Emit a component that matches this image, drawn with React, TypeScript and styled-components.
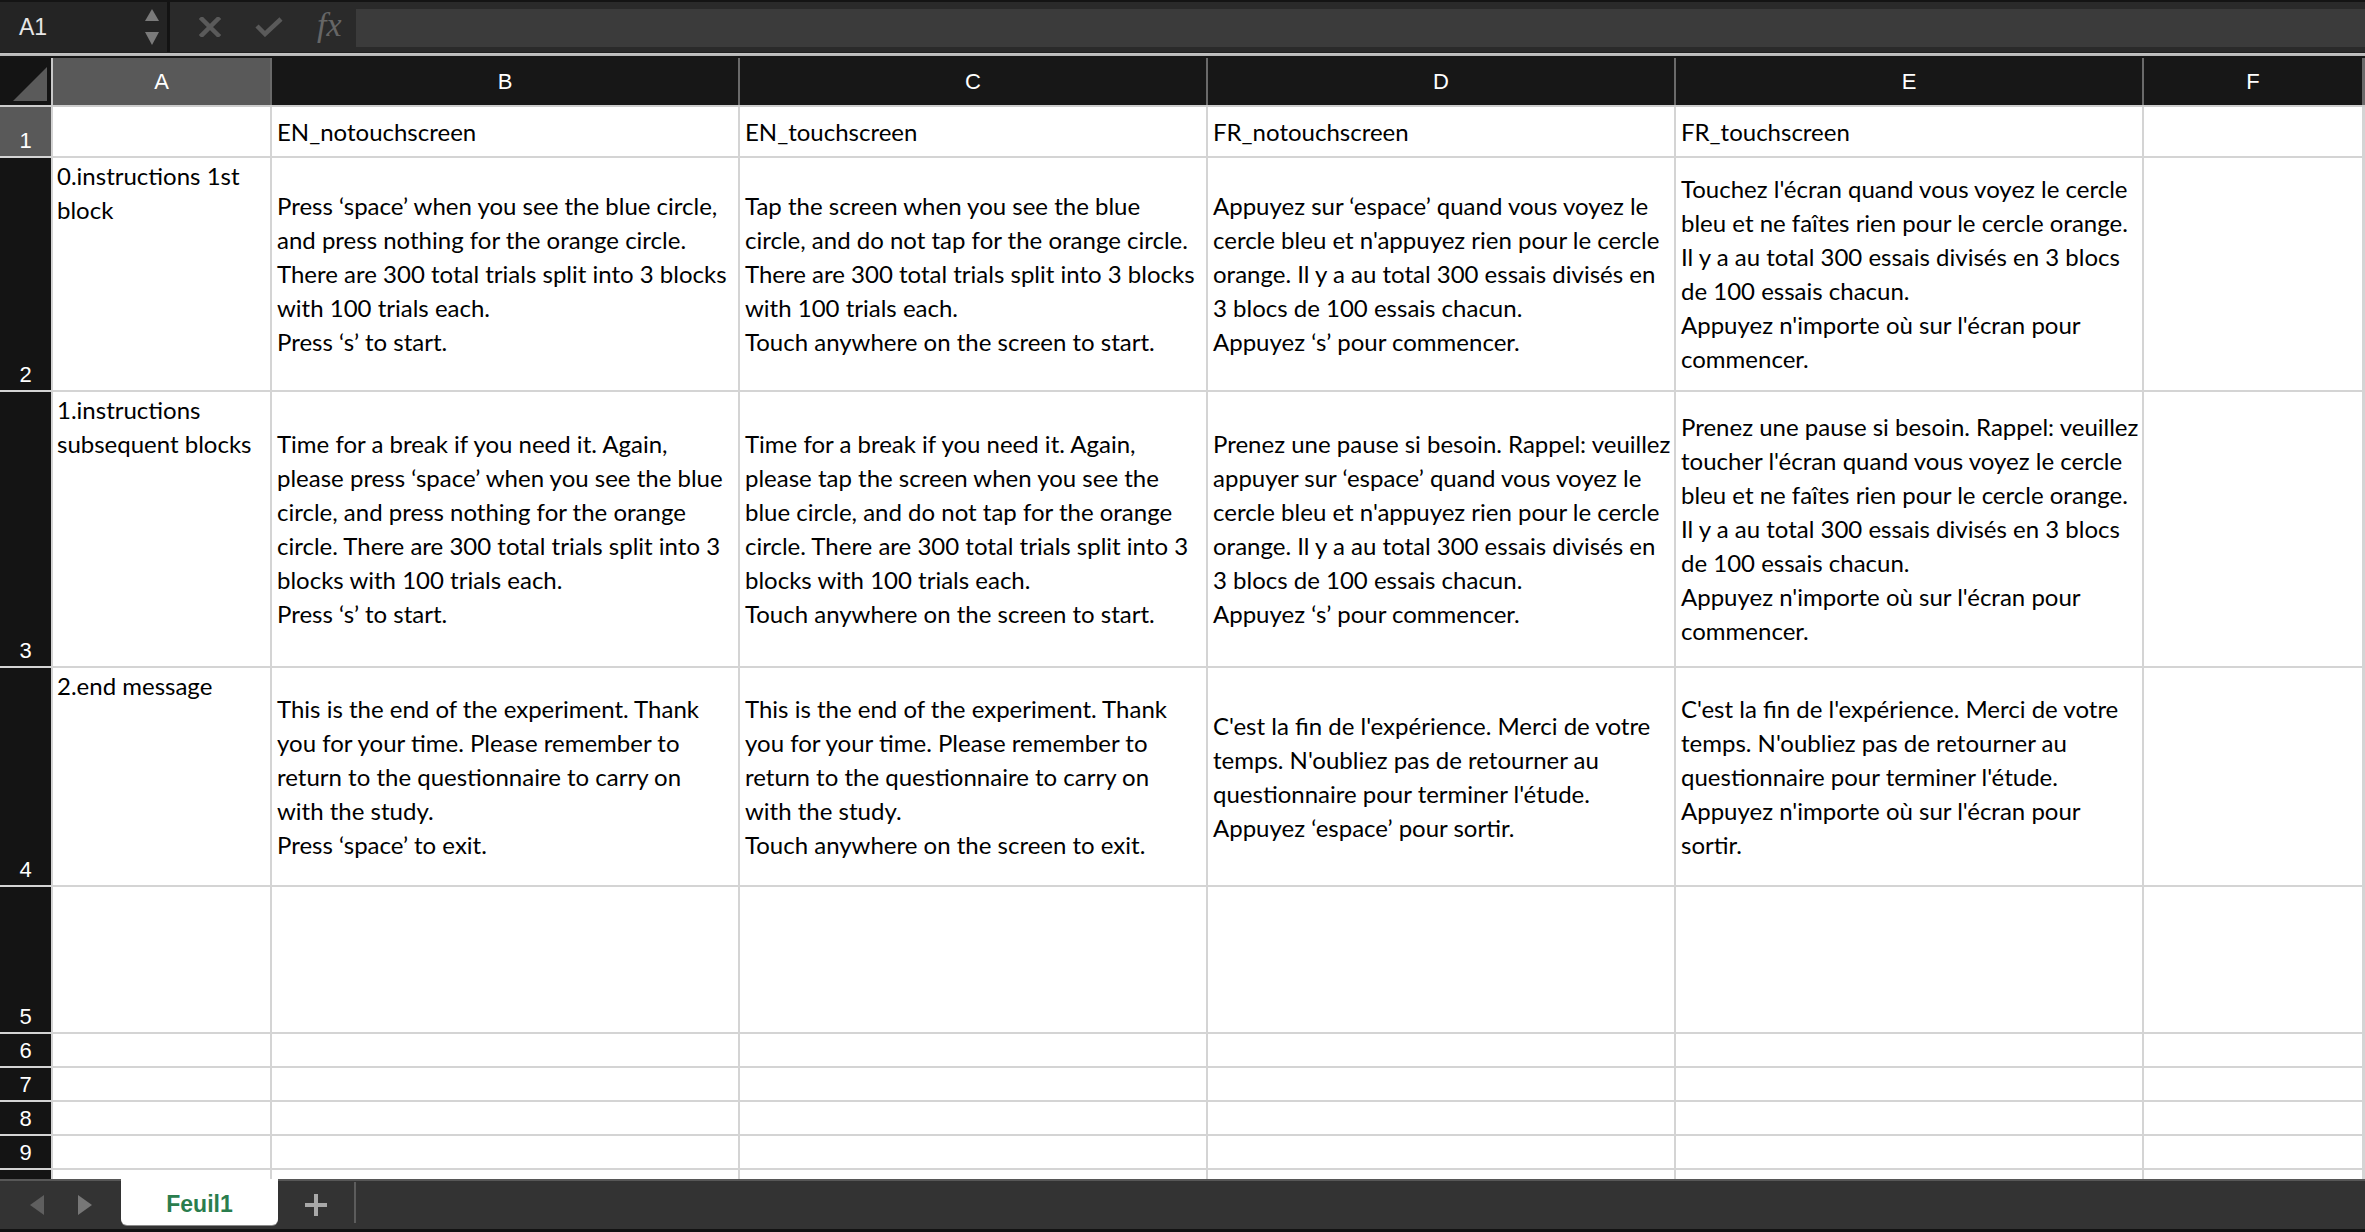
import React from 'react';
import styled, { createGlobalStyle } from 'styled-components';

// column template shared by the header row and the sheet body
const COLS = '51px 217px 466px 466px 466px 466px 1fr';

const GlobalStyle = createGlobalStyle`
  html, body {
    margin: 0;
    padding: 0;
    height: 100%;
    overflow: hidden;
    background: #1c1c1c;
  }
  #root {
    height: 100%;
  }
`;

const Window = styled.div`
  display: flex;
  flex-direction: column;
  width: 2365px;
  height: 1232px;
  overflow: hidden;
  font-family: 'Liberation Sans', Arial, sans-serif;
`;

const FormulaBar = styled.div`
  display: flex;
  height: 52px;
  box-sizing: border-box;
  border-top: 2px solid #141414;
  background: #2a2a2a;
`;

const NameBox = styled.div`
  width: 170px;
  box-sizing: border-box;
  display: flex;
  align-items: center;
  justify-content: space-between;
  padding: 0 8px 0 19px;
  background: #242424;
  border-right: 3px solid #131313;
  color: #e6e6e6;
  font-size: 23px;
`;

const Tools = styled.div`
  display: flex;
  align-items: center;
  gap: 34px;
  padding: 0 14px 0 29px;
`;

const FxLabel = styled.span`
  font-family: 'Liberation Serif', 'DejaVu Serif', serif;
  font-style: italic;
  font-size: 34px;
  color: #666666;
  margin-top: -4px;
`;

const FormulaInput = styled.div`
  flex: 1;
  margin: 7px 0 5px;
  background: #3b3b3b;
`;

const Divider = styled.div`
  height: 6px;
  background: linear-gradient(#1e1e1e 0, #1e1e1e 1px, #c4c4c4 1px, #b5b5b5 4px, #161616 4px);
`;

const HeaderRow = styled.div`
  display: grid;
  grid-template-columns: ${COLS};
  column-gap: 2px;
  height: 49px;
  box-sizing: border-box;
  padding-right: 3px;
  background: #6a6a6a;
  border-bottom: 2px solid #cdcdcd;
`;

const Corner = styled.div`
  position: relative;
  background: #141414;
  box-shadow: 2px 0 0 #c8c8c8;
`;

const ColHeader = styled.div<{ $selected?: boolean }>`
  display: flex;
  align-items: center;
  justify-content: center;
  background: ${(p) => (p.$selected ? '#595959' : '#171717')};
  color: #ffffff;
  font-size: 22px;
`;

const Body = styled.div`
  flex: 1;
  overflow: hidden;
  display: grid;
  grid-template-columns: ${COLS};
  grid-template-rows: 49px 232px 274px 217px 145px 32px 32px 32px 32px 32px;
  gap: 2px;
  align-content: start;
  padding-right: 3px;
  background: #d4d4d4;
`;

const RowHeader = styled.div<{ $selected?: boolean }>`
  display: flex;
  align-items: flex-end;
  justify-content: center;
  padding-bottom: 3px;
  background: ${(p) => (p.$selected ? '#595959' : '#141414')};
  color: #ffffff;
  font-size: 22px;
  line-height: 24px;
`;

const Cell = styled.div<{ $valign?: 'top' | 'center' }>`
  display: flex;
  flex-direction: column;
  justify-content: ${(p) => (p.$valign === 'top' ? 'flex-start' : 'center')};
  padding: ${(p) => (p.$valign === 'top' ? '1px 4px 0' : '0 5px')};
  overflow: hidden;
  background: #ffffff;
  color: #000000;
  font-family: Lato, 'Liberation Sans', sans-serif;
  font-size: 24px;
  line-height: 34px;
  white-space: nowrap;
`;

const Line = styled.span`
  display: block;
`;

const TabBar = styled.div`
  display: flex;
  height: 53px;
  box-sizing: border-box;
  background: #333333;
  border-top: 2px solid #575757;
  border-bottom: 3px solid #121212;
`;

const NavArrows = styled.div`
  width: 121px;
  display: flex;
  align-items: center;
  gap: 34px;
  padding-left: 30px;
  box-sizing: border-box;
`;

const SheetTab = styled.div`
  width: 157px;
  height: 46px;
  margin-top: -2px;
  padding-top: 4px;
  box-sizing: border-box;
  display: flex;
  align-items: center;
  justify-content: center;
  background: #ffffff;
  border-radius: 0 0 6px 6px;
  box-shadow: 0 1px 0 #8a8a8a;
  color: #2a7d4e;
  font-weight: bold;
  font-size: 23px;
`;

const AddSheet = styled.div`
  width: 76px;
  display: flex;
  align-items: center;
  justify-content: center;
`;

const TabSeparator = styled.div`
  width: 2px;
  margin-top: 1px;
  height: 41px;
  background: #5c5c5c;
`;

type Row = {
  cells: string[][];
};

const rows: Row[] = [
  {
    cells: [[], ['EN_notouchscreen'], ['EN_touchscreen'], ['FR_notouchscreen'], ['FR_touchscreen'], []],
  },
  {
    cells: [
      ['0.instructions 1st', 'block'],
      [
        'Press ‘space’ when you see the blue circle,',
        'and press nothing for the orange circle.',
        'There are 300 total trials split into 3 blocks',
        'with 100 trials each.',
        'Press ‘s’ to start.',
      ],
      [
        'Tap the screen when you see the blue',
        'circle, and do not tap for the orange circle.',
        'There are 300 total trials split into 3 blocks',
        'with 100 trials each.',
        'Touch anywhere on the screen to start.',
      ],
      [
        'Appuyez sur ‘espace’ quand vous voyez le',
        "cercle bleu et n'appuyez rien pour le cercle",
        'orange. Il y a au total 300 essais divisés en',
        '3 blocs de 100 essais chacun.',
        'Appuyez ‘s’ pour commencer.',
      ],
      [
        "Touchez l'écran quand vous voyez le cercle",
        'bleu et ne faîtes rien pour le cercle orange.',
        'Il y a au total 300 essais divisés en 3 blocs',
        'de 100 essais chacun.',
        "Appuyez n'importe où sur l'écran pour",
        'commencer.',
      ],
      [],
    ],
  },
  {
    cells: [
      ['1.instructions', 'subsequent blocks'],
      [
        'Time for a break if you need it. Again,',
        'please press ‘space’ when you see the blue',
        'circle, and press nothing for the orange',
        'circle. There are 300 total trials split into 3',
        'blocks with 100 trials each.',
        'Press ‘s’ to start.',
      ],
      [
        'Time for a break if you need it. Again,',
        'please tap the screen when you see the',
        'blue circle, and do not tap for the orange',
        'circle. There are 300 total trials split into 3',
        'blocks with 100 trials each.',
        'Touch anywhere on the screen to start.',
      ],
      [
        'Prenez une pause si besoin. Rappel: veuillez',
        'appuyer sur ‘espace’ quand vous voyez le',
        "cercle bleu et n'appuyez rien pour le cercle",
        'orange. Il y a au total 300 essais divisés en',
        '3 blocs de 100 essais chacun.',
        'Appuyez ‘s’ pour commencer.',
      ],
      [
        'Prenez une pause si besoin. Rappel: veuillez',
        "toucher l'écran quand vous voyez le cercle",
        'bleu et ne faîtes rien pour le cercle orange.',
        'Il y a au total 300 essais divisés en 3 blocs',
        'de 100 essais chacun.',
        "Appuyez n'importe où sur l'écran pour",
        'commencer.',
      ],
      [],
    ],
  },
  {
    cells: [
      ['2.end message'],
      [
        'This is the end of the experiment. Thank',
        'you for your time. Please remember to',
        'return to the questionnaire to carry on',
        'with the study.',
        'Press ‘space’ to exit.',
      ],
      [
        'This is the end of the experiment. Thank',
        'you for your time. Please remember to',
        'return to the questionnaire to carry on',
        'with the study.',
        'Touch anywhere on the screen to exit.',
      ],
      [
        "C'est la fin de l'expérience. Merci de votre",
        "temps. N'oubliez pas de retourner au",
        "questionnaire pour terminer l'étude.",
        'Appuyez ‘espace’ pour sortir.',
      ],
      [
        "C'est la fin de l'expérience. Merci de votre",
        "temps. N'oubliez pas de retourner au",
        "questionnaire pour terminer l'étude.",
        "Appuyez n'importe où sur l'écran pour",
        'sortir.',
      ],
      [],
    ],
  },
];

// empty rows below the data; the last one is cut off by the tab bar, so its number stays hidden
const EMPTY_ROWS = ['5', '6', '7', '8', '9', ''];
const LETTERS = ['A', 'B', 'C', 'D', 'E', 'F'];

const Spinner = () => (
  <svg width="14" height="36" viewBox="0 0 14 36">
    <polygon points="7,0 14,12 0,12" fill="#7a7a7a" />
    <polygon points="0,23 14,23 7,36" fill="#7a7a7a" />
  </svg>
);

const CancelIcon = () => (
  <svg width="22" height="20" viewBox="0 0 22 20">
    <path d="M3 2 L19 18 M19 2 L3 18" stroke="#5a5a5a" strokeWidth="4.5" strokeLinecap="square" />
  </svg>
);

const ConfirmIcon = () => (
  <svg width="28" height="20" viewBox="0 0 28 20">
    <path d="M2 9 L10 17 L26 2" stroke="#5a5a5a" strokeWidth="4.5" fill="none" />
  </svg>
);

const CornerTriangle = () => (
  <svg width="34" height="34" viewBox="0 0 34 34" style={{ position: 'absolute', right: 4, bottom: 4 }}>
    <polygon points="34,0 34,34 0,34" fill="#5a5a5a" />
  </svg>
);

const Arrow = ({ dir, color }: { dir: 'left' | 'right'; color: string }) => (
  <svg width="14" height="20" viewBox="0 0 14 20">
    <polygon points={dir === 'left' ? '14,0 14,20 0,10' : '0,0 0,20 14,10'} fill={color} />
  </svg>
);

const Plus = () => (
  <svg width="22" height="22" viewBox="0 0 22 22">
    <rect x="0" y="9" width="22" height="4" fill="#a8a8a8" />
    <rect x="9" y="0" width="4" height="22" fill="#a8a8a8" />
  </svg>
);

const App = () => (
  <>
    <GlobalStyle />
    <Window>
      <FormulaBar>
        <NameBox>
          <span>A1</span>
          <Spinner />
        </NameBox>
        <Tools>
          <CancelIcon />
          <ConfirmIcon />
          <FxLabel>fx</FxLabel>
        </Tools>
        <FormulaInput />
      </FormulaBar>
      <Divider />

      <HeaderRow>
        <Corner>
          <CornerTriangle />
        </Corner>
        {LETTERS.map((l) => (
          <ColHeader key={l} $selected={l === 'A'}>
            {l}
          </ColHeader>
        ))}
      </HeaderRow>

      <Body>
        {rows.map((row, i) => (
          <React.Fragment key={i}>
            <RowHeader $selected={i === 0}>{i + 1}</RowHeader>
            {row.cells.map((lines, c) => (
              <Cell key={c} $valign={c === 0 ? 'top' : 'center'}>
                {lines.map((t, k) => (
                  <Line key={k}>{t}</Line>
                ))}
              </Cell>
            ))}
          </React.Fragment>
        ))}
        {EMPTY_ROWS.map((n, i) => (
          <React.Fragment key={i}>
            <RowHeader>{n}</RowHeader>
            {LETTERS.map((l) => (
              <Cell key={l} />
            ))}
          </React.Fragment>
        ))}
      </Body>

      <TabBar>
        <NavArrows>
          <Arrow dir="left" color="#5f5f5f" />
          <Arrow dir="right" color="#777777" />
        </NavArrows>
        <SheetTab>Feuil1</SheetTab>
        <AddSheet>
          <Plus />
        </AddSheet>
        <TabSeparator />
      </TabBar>
    </Window>
  </>
);

export default App;
